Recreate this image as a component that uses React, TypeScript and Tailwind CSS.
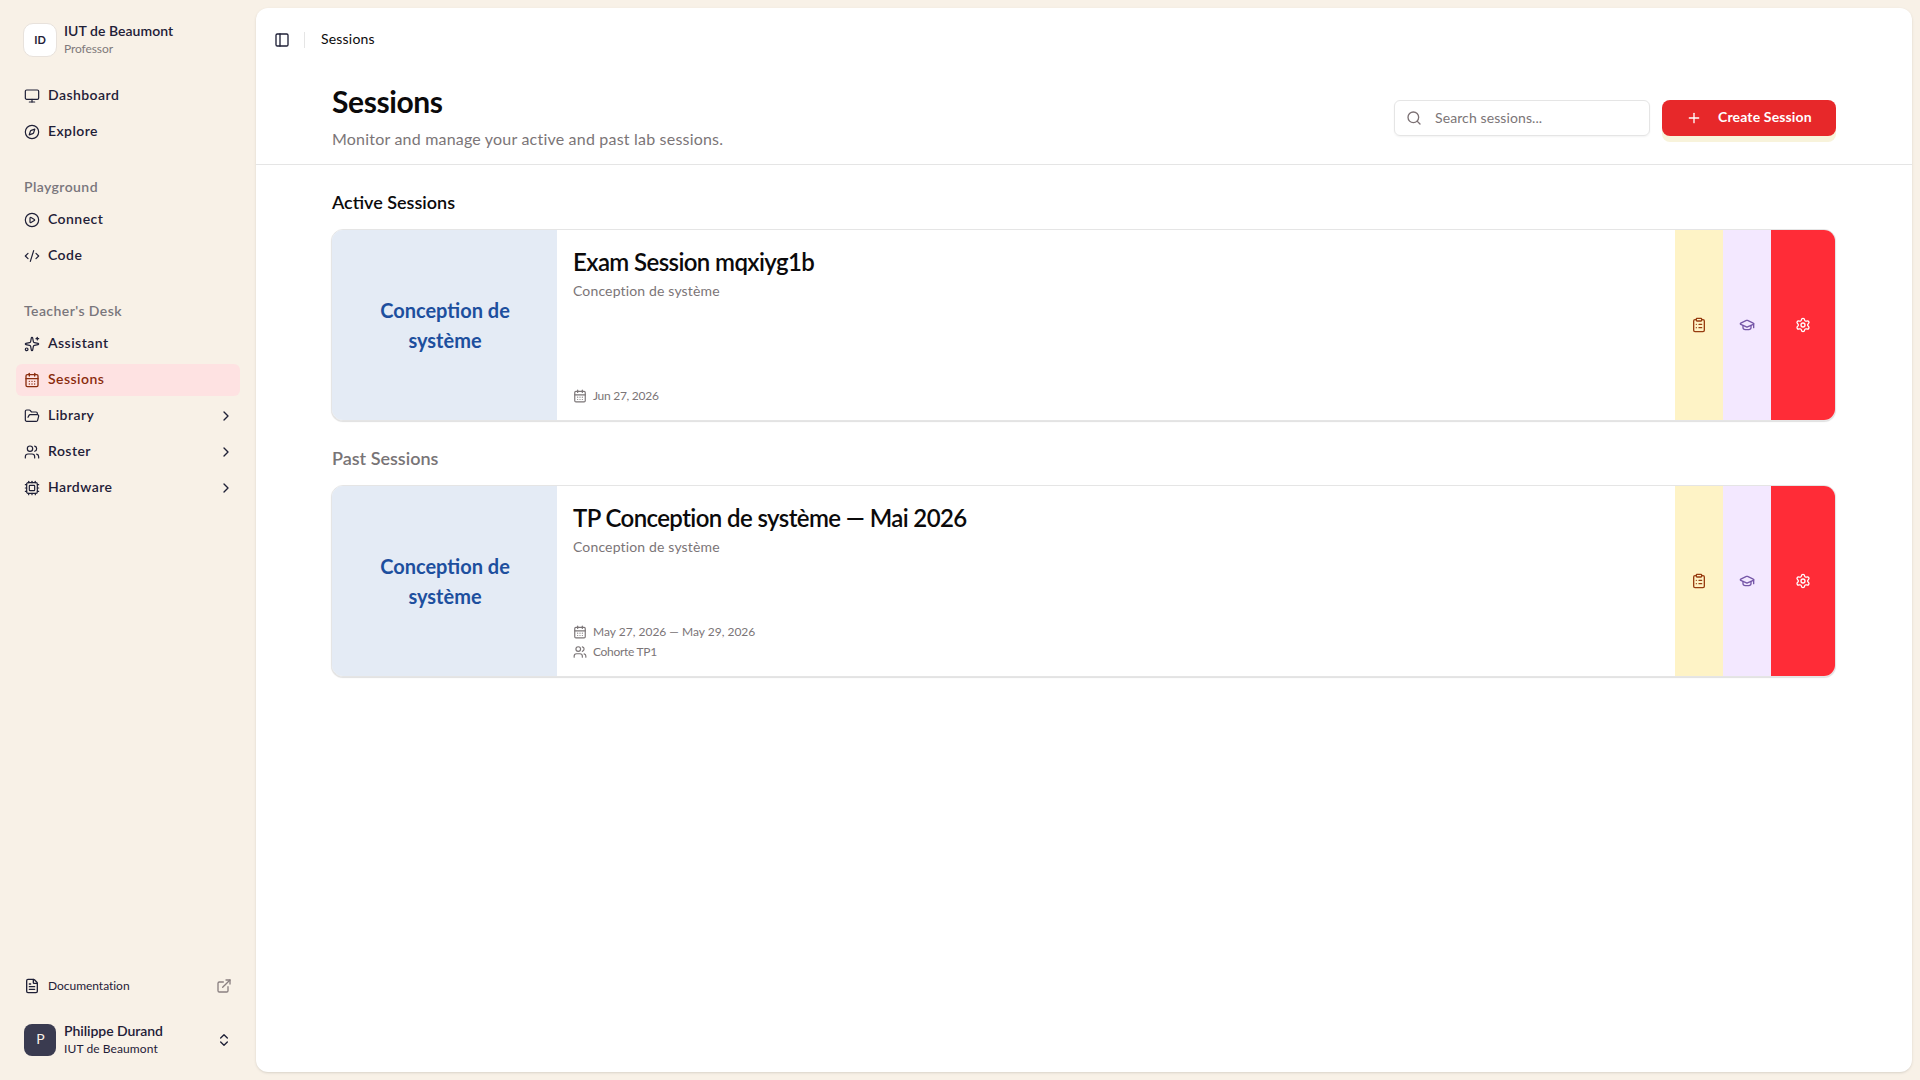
import type { ReactNode } from "react";
import {
  CalendarDays,
  ChevronRight,
  ChevronsUpDown,
  CirclePlay,
  ClipboardList,
  CodeXml,
  Compass,
  Cpu,
  ExternalLink,
  FileText,
  FolderOpen,
  GraduationCap,
  Monitor,
  PanelLeft,
  Plus,
  Search,
  Settings,
  Sparkles,
  Users,
  type LucideIcon,
} from "lucide-react";
import clsx from "clsx";

type NavItem = { label: string; icon: LucideIcon; active?: boolean; expandable?: boolean };

type Session = {
  title: string;
  course: string;
  dates: string;
  datesClass: string;
  cohort?: string;
};

const NAV: { title?: string; items: NavItem[] }[] = [
  {
    items: [
      { label: "Dashboard", icon: Monitor },
      { label: "Explore", icon: Compass },
    ],
  },
  {
    title: "Playground",
    items: [
      { label: "Connect", icon: CirclePlay },
      { label: "Code", icon: CodeXml },
    ],
  },
  {
    title: "Teacher's Desk",
    items: [
      { label: "Assistant", icon: Sparkles },
      { label: "Sessions", icon: CalendarDays, active: true },
      { label: "Library", icon: FolderOpen, expandable: true },
      { label: "Roster", icon: Users, expandable: true },
      { label: "Hardware", icon: Cpu, expandable: true },
    ],
  },
];

const ACTIVE: Session[] = [
  {
    title: "Exam Session mqxiyg1b",
    course: "Conception de système",
    dates: "Jun 27, 2026",
    datesClass: "tracking-[-0.28px]",
  },
];

const PAST: Session[] = [
  {
    title: "TP Conception de système — Mai 2026",
    course: "Conception de système",
    dates: "May 27, 2026 — May 29, 2026",
    datesClass: "tracking-normal",
    cohort: "Cohorte TP1",
  },
];

function NavRow({ item }: { item: NavItem }) {
  const Icon = item.icon;
  return (
    <a
      className={clsx(
        "flex h-8 items-center gap-2 rounded-md px-2 text-sm font-semibold tracking-[0.45px]",
        item.active ? "bg-[#fee2e2] text-[#8a2c0d]" : "text-[#1f2037]"
      )}
    >
      <Icon className="size-4" strokeWidth={item.active ? 2 : 1.8} />
      <span className="flex-1 pb-0.5">{item.label}</span>
      {item.expandable && <ChevronRight className="size-4 -mr-0.5" />}
    </a>
  );
}

function Sidebar() {
  return (
    <aside className="flex w-64 shrink-0 flex-col p-2 text-[#1f2037]">
      <div className="p-2">
        <div className="flex h-12 items-center gap-2 px-2">
          <div className="flex size-[34px] -ml-px items-center justify-center rounded-[10px] border border-[#e8e2dc] bg-white text-[11px] font-bold">
            ID
          </div>
          <div className="-ml-px">
            <div className="text-sm leading-[17px] font-semibold tracking-[0.05px]">IUT de Beaumont</div>
            <div className="pt-px text-xs leading-[18px] tracking-[-0.1px] text-[#7f797b]">Professor</div>
          </div>
        </div>
      </div>
      <nav className="flex-1">
        {NAV.map((group, i) => (
          <div key={i} className="mb-2 p-2">
            {group.title && (
              <div className="flex h-8 items-center px-2 pb-0.5 text-sm font-semibold tracking-[0.42px] text-[#79767c]">
                {group.title}
              </div>
            )}
            <div className="flex flex-col gap-1">
              {group.items.map((item) => (
                <NavRow key={item.label} item={item} />
              ))}
            </div>
          </div>
        ))}
      </nav>
      <div className="p-2">
        <a className="flex h-7 items-center gap-2 px-2 text-xs">
          <FileText className="size-4" />
          <span className="flex-1 tracking-[-0.03px]">Documentation</span>
          <ExternalLink className="size-4 text-[#8a8081]" />
        </a>
      </div>
      <div className="p-2">
        <div className="flex h-12 items-center gap-2 px-2">
          <div className="flex size-8 items-center justify-center rounded-lg bg-[#3a3b50] pb-0.5 pl-px text-sm text-[#f8f1e7]">
            P
          </div>
          <div className="flex-1">
            <div className="text-sm leading-[17px] font-semibold tracking-[-0.05px]">Philippe Durand</div>
            <div className="pt-px text-xs leading-[18px] tracking-[0.1px]">IUT de Beaumont</div>
          </div>
          <ChevronsUpDown className="size-4" />
        </div>
      </div>
    </aside>
  );
}

function Meta({ icon: Icon, className, children }: { icon: LucideIcon; className?: string; children: ReactNode }) {
  return (
    <div className="flex h-5 items-center gap-1.5 text-xs text-[#7b7577]">
      <Icon className="size-3.5" />
      <span className={className}>{children}</span>
    </div>
  );
}

function SessionCard({ session }: { session: Session }) {
  return (
    <article className="flex h-48 overflow-hidden rounded-xl border border-[#e5e5e5] bg-white shadow-[0_1px_1px_#e0e0e0]">
      <div className="flex w-[225px] items-center justify-center bg-[#e4ebf5] pr-[31px] pl-8 text-center text-xl leading-[30px] font-bold text-[#1d4f9e]">
        {session.course}
      </div>
      <div className="flex flex-1 flex-col px-4 pt-4 pb-3.5">
        <h3 className="text-2xl leading-[31px] font-semibold tracking-[-0.6px] text-[#0b0a0b]">{session.title}</h3>
        <p className="mt-0.5 text-sm leading-6 tracking-[0.15px] text-[#7b7577]">{session.course}</p>
        <div className="mt-auto">
          <Meta icon={CalendarDays} className={session.datesClass}>{session.dates}</Meta>
          {session.cohort && <Meta icon={Users} className="tracking-[-0.3px]">{session.cohort}</Meta>}
        </div>
      </div>
      <div className="flex">
        <button className="flex w-12 items-center justify-center bg-[#fef3c6] text-[#973c10]">
          <ClipboardList className="size-4" />
        </button>
        <button className="flex w-12 items-center justify-center bg-[#f3e8ff] text-[#7556a8]">
          <GraduationCap className="size-4" />
        </button>
        <button className="flex w-16 items-center justify-center bg-[#ff2c37] text-white">
          <Settings className="size-4" />
        </button>
      </div>
    </article>
  );
}

export default function App() {
  return (
    <div className="flex h-screen bg-[#f8f1e7] font-['Lato',sans-serif]">
      <Sidebar />
      <main className="my-2 mr-2 flex flex-1 flex-col rounded-xl bg-white text-[#0b0a0b] shadow-sm">
        <header className="flex h-16 items-center px-[18px]">
          <PanelLeft className="size-4 text-[#1f2037]" />
          <div className="mr-4 ml-3.5 h-4 w-px bg-[#e5e5e5]" />
          <span className="pb-0.5 text-sm tracking-[0.2px]">Sessions</span>
        </header>
        <div className="flex h-[93px] items-start justify-between border-b border-[#e5e5e5] px-[76px]">
          <div className="pt-[11px]">
            <h1 className="text-3xl leading-9 font-bold tracking-[-0.4px]">Sessions</h1>
            <p className="mt-2 text-base leading-6 tracking-[0.2px] text-[#7b7577]">
              Monitor and manage your active and past lab sessions.
            </p>
          </div>
          <div className="flex gap-3 pt-7">
            <label className="flex h-9 w-64 items-center gap-[13px] rounded-md border border-[#e5e5e5] px-[11px] shadow-xs">
              <Search className="size-4 shrink-0 text-[#7b7073]" />
              <input
                placeholder="Search sessions..."
                className="w-full bg-transparent text-sm tracking-[0.1px] outline-none placeholder:text-[#7b7577]"
              />
            </label>
            <button className="flex h-9 w-[174px] items-center gap-4 rounded-lg bg-[#e7282a] pl-6 text-sm font-bold tracking-[0.15px] text-white shadow-[0_6px_0_#f8f3db]">
              <Plus className="size-4" />
              <span className="pb-0.5">Create Session</span>
            </button>
          </div>
        </div>
        <div className="pr-[76px] pl-[75px]">
          <h2 className="mt-[23px] pl-px text-lg leading-7 font-semibold">Active Sessions</h2>
          <div className="mt-[13px]">
            {ACTIVE.map((s) => (
              <SessionCard key={s.title} session={s} />
            ))}
          </div>
          <h2 className="mt-[23px] pl-px text-lg leading-7 font-semibold text-[#787476]">Past Sessions</h2>
          <div className="mt-[13px]">
            {PAST.map((s) => (
              <SessionCard key={s.title} session={s} />
            ))}
          </div>
        </div>
      </main>
    </div>
  );
}
